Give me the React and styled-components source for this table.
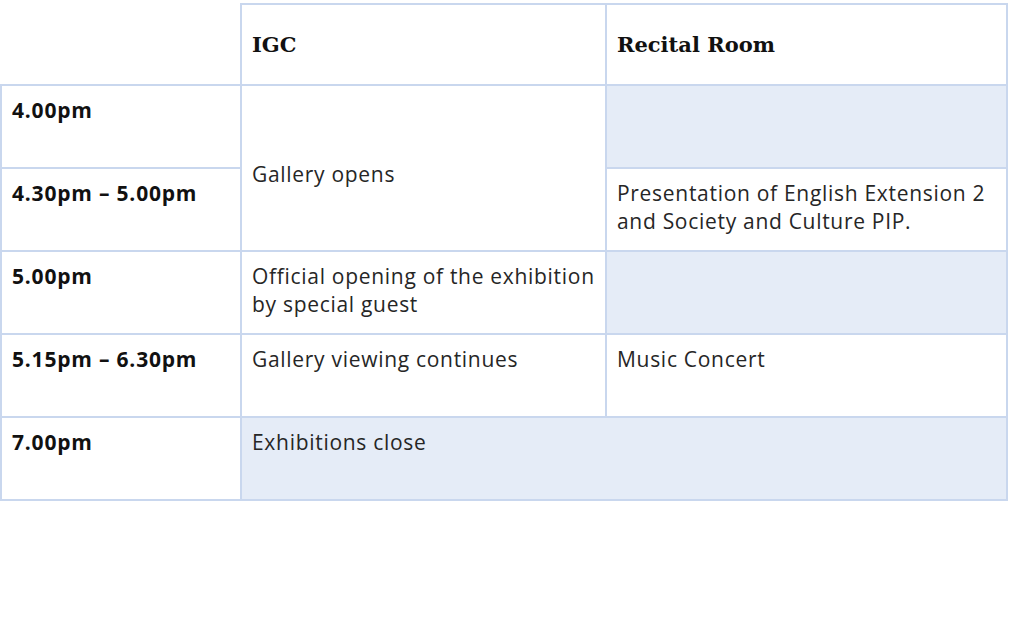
import React from 'react';
import styled, { createGlobalStyle } from 'styled-components';

const GlobalStyle = createGlobalStyle`
  html, body {
    margin: 0;
    padding: 0;
    background: #ffffff;
  }
`;

const StyledPage = styled.div`
  padding: 3px 0 0 0;
  font-family: 'Open Sans', 'Noto Sans', sans-serif;
  color: #262626;
`;

const StyledTable = styled.table`
  width: 1006px;
  border-collapse: collapse;
  table-layout: fixed;
`;

const StyledHeadCell = styled.th`
  height: 79px;
  padding: 0 10px;
  text-align: left;
  vertical-align: middle;
  font-family: 'DejaVu Serif', 'Liberation Serif', serif;
  font-size: 21px;
  font-weight: bold;
  color: #111111;
  border: 2px solid #c9d7ee;
  &.empty {
    border-top-color: transparent;
    border-left-color: transparent;
  }
`;

const StyledTime = styled.td`
  height: 71px;
  padding: 10px 10px 0;
  vertical-align: top;
  font-size: 21px;
  line-height: 28px;
  letter-spacing: 0.8px;
  font-weight: bold;
  color: #111111;
  border: 2px solid #c9d7ee;
`;

const StyledCell = styled.td`
  padding: ${(props) => (props.$middle ? '12px 4px 0 10px' : '10px 4px 0 10px')};
  vertical-align: ${(props) => (props.$middle ? 'middle' : 'top')};
  font-size: 21px;
  line-height: 28px;
  letter-spacing: 0.7px;
  border: 2px solid #c9d7ee;
  background: ${(props) => (props.$shaded ? '#e5ecf7' : '#ffffff')};
`;

const times = ['4.00pm', '4.30pm – 5.00pm', '5.00pm', '5.15pm – 6.30pm', '7.00pm'];

const App = () => {
  return (
    <StyledPage>
      <GlobalStyle />
      <StyledTable>
        <colgroup>
          <col style={{ width: 240 }} />
          <col style={{ width: 365 }} />
          <col style={{ width: 401 }} />
        </colgroup>
        <thead>
          <tr>
            <StyledHeadCell className='empty' />
            <StyledHeadCell>IGC</StyledHeadCell>
            <StyledHeadCell>Recital Room</StyledHeadCell>
          </tr>
        </thead>
        <tbody>
          <tr>
            <StyledTime>{times[0]}</StyledTime>
            <StyledCell rowSpan={2} $middle>
              Gallery opens
            </StyledCell>
            <StyledCell $shaded />
          </tr>
          <tr>
            <StyledTime>{times[1]}</StyledTime>
            <StyledCell>
              Presentation of English Extension 2 and Society and Culture PIP.
            </StyledCell>
          </tr>
          <tr>
            <StyledTime>{times[2]}</StyledTime>
            <StyledCell>Official opening of the exhibition by special guest</StyledCell>
            <StyledCell $shaded />
          </tr>
          <tr>
            <StyledTime>{times[3]}</StyledTime>
            <StyledCell>Gallery viewing continues</StyledCell>
            <StyledCell>Music Concert</StyledCell>
          </tr>
          <tr>
            <StyledTime>{times[4]}</StyledTime>
            <StyledCell colSpan={2} $shaded>
              Exhibitions close
            </StyledCell>
          </tr>
        </tbody>
      </StyledTable>
    </StyledPage>
  );
};

export default App;
